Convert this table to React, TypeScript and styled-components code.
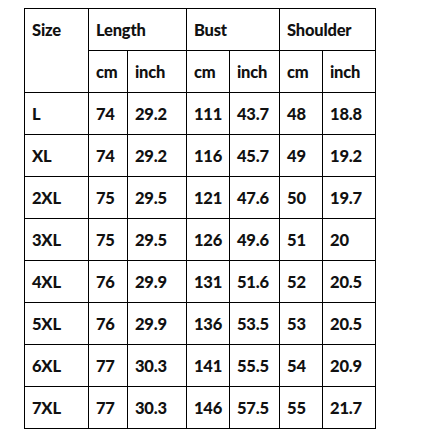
import styled, { createGlobalStyle } from "styled-components";

const GlobalStyle = createGlobalStyle`
    body {
        margin: 0;
        background: #fff;
    }
`;

const Page = styled.div`
    padding: 8px 0 0 24px;
    font-family: Lato, "Open Sans", sans-serif;
`;

const SizeTable = styled.table`
    border-collapse: collapse;
    table-layout: fixed;
    width: 352px;
    color: #111;
`;

const Cell = styled.td<{ $top?: boolean }>`
    border: 1px solid #000;
    height: 41px;
    padding: ${(p) => (p.$top ? "11px 0 0 7px" : "0 0 0 7px")};
    vertical-align: ${(p) => (p.$top ? "top" : "middle")};
    font-size: 16.5px;
    font-weight: 900;
    letter-spacing: -0.2px;
    text-align: left;
    white-space: nowrap;
    overflow: hidden;
`;

const widths = [64, 39, 59, 43, 50, 43, 53];

const rows = [
    ["L", "74", "29.2", "111", "43.7", "48", "18.8"],
    ["XL", "74", "29.2", "116", "45.7", "49", "19.2"],
    ["2XL", "75", "29.5", "121", "47.6", "50", "19.7"],
    ["3XL", "75", "29.5", "126", "49.6", "51", "20"],
    ["4XL", "76", "29.9", "131", "51.6", "52", "20.5"],
    ["5XL", "76", "29.9", "136", "53.5", "53", "20.5"],
    ["6XL", "77", "30.3", "141", "55.5", "54", "20.9"],
    ["7XL", "77", "30.3", "146", "57.5", "55", "21.7"],
];

export default function App() {
    return (
        <>
            <GlobalStyle />
            <Page>
                <SizeTable>
                    <colgroup>
                        {widths.map((w, i) => (
                            <col key={i} style={{ width: w }} />
                        ))}
                    </colgroup>
                    <tbody>
                        <tr>
                            <Cell rowSpan={2} $top>Size</Cell>
                            <Cell colSpan={2}>Length</Cell>
                            <Cell colSpan={2}>Bust</Cell>
                            <Cell colSpan={2}>Shoulder</Cell>
                        </tr>
                        <tr>
                            <Cell>cm</Cell>
                            <Cell>inch</Cell>
                            <Cell>cm</Cell>
                            <Cell>inch</Cell>
                            <Cell>cm</Cell>
                            <Cell>inch</Cell>
                        </tr>
                        {rows.map((r) => (
                            <tr key={r[0]}>
                                {r.map((v, i) => (
                                    <Cell key={i}>{v}</Cell>
                                ))}
                            </tr>
                        ))}
                    </tbody>
                </SizeTable>
            </Page>
        </>
    );
}
